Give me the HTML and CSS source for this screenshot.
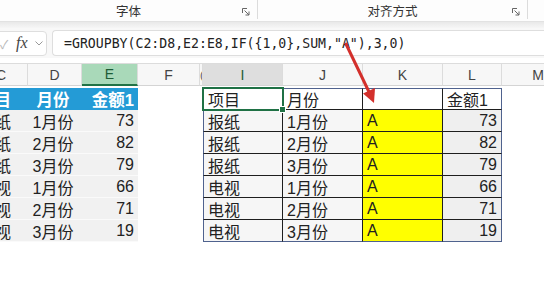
FILE: index.html
```html
<!DOCTYPE html>
<html lang="zh">
<head>
<meta charset="utf-8">
<link rel="stylesheet" href="styles.css">
</head>
<body>
<div class="page">
  <div class="ribbon">
    <div class="group g1"><span class="glabel">字体</span><svg class="launch" viewBox="0 0 8 8"><path d="M0.5 5V0.5H5M2.5 2.5L7 7M7 3.5V7H3.5" fill="none" stroke="#666" stroke-width="1"/></svg></div>
    <div class="group g2"><span class="glabel">对齐方式</span><svg class="launch" viewBox="0 0 8 8"><path d="M0.5 5V0.5H5M2.5 2.5L7 7M7 3.5V7H3.5" fill="none" stroke="#666" stroke-width="1"/></svg></div>
  </div>
  <div class="band"></div>
  <div class="fxbar">
    <div class="fxbox">
      <span class="check">✓</span>
      <span class="fx">fx</span>
      <svg class="chev" viewBox="0 0 8 5"><path d="M0.5 0.5L4 4L7.5 0.5" fill="none" stroke="#999" stroke-width="1"/></svg>
    </div>
    <div class="formula">=GROUPBY(C2:D8,E2:E8,IF({1,0},SUM,"A"),3,0)</div>
  </div>
  <div class="sheet">
    <div class="ch">C</div><div class="ch">D</div><div class="ch ch-e">E</div><div class="ch">F</div><div class="ch ch-g">(</div><div class="ch ch-i">I</div><div class="ch">J</div><div class="ch">K</div><div class="ch">L</div><div class="ch ch-m">M</div>

    <div class="lh lc">项目</div><div class="lh lm">月份</div><div class="lh ln">金额1</div><div class="e"></div><div class="e"></div>
    <div class="rc rt ri sel">项目<span class="handle"></span></div><div class="rc rt">月份</div><div class="rc rt"></div><div class="rc rt rl-h">金额1</div><div class="e"></div>

    <div class="ld lc">报纸</div><div class="ld lm">1月份</div><div class="ld ln">73</div><div class="e"></div><div class="e"></div>
    <div class="rc ri g">报纸</div><div class="rc g">1月份</div><div class="rc y">A</div><div class="rc rl">73</div><div class="e"></div>

    <div class="ld lc">报纸</div><div class="ld lm">2月份</div><div class="ld ln">82</div><div class="e"></div><div class="e"></div>
    <div class="rc ri g">报纸</div><div class="rc g">2月份</div><div class="rc y">A</div><div class="rc rl">82</div><div class="e"></div>

    <div class="ld lc">报纸</div><div class="ld lm">3月份</div><div class="ld ln">79</div><div class="e"></div><div class="e"></div>
    <div class="rc ri g">报纸</div><div class="rc g">3月份</div><div class="rc y">A</div><div class="rc rl">79</div><div class="e"></div>

    <div class="ld lc">电视</div><div class="ld lm">1月份</div><div class="ld ln">66</div><div class="e"></div><div class="e"></div>
    <div class="rc ri g">电视</div><div class="rc g">1月份</div><div class="rc y">A</div><div class="rc rl">66</div><div class="e"></div>

    <div class="ld lc">电视</div><div class="ld lm">2月份</div><div class="ld ln">71</div><div class="e"></div><div class="e"></div>
    <div class="rc ri g">电视</div><div class="rc g">2月份</div><div class="rc y">A</div><div class="rc rl">71</div><div class="e"></div>

    <div class="ld lc">电视</div><div class="ld lm">3月份</div><div class="ld ln">19</div><div class="e"></div><div class="e"></div>
    <div class="rc ri g rb">电视</div><div class="rc g rb">3月份</div><div class="rc y rb">A</div><div class="rc rl rb">19</div><div class="e"></div>
  </div>
  <svg class="arrow" viewBox="0 0 544 294" width="544" height="294">
    <line x1="346" y1="44" x2="370" y2="94" stroke="#d3302c" stroke-width="3" stroke-linecap="round"/>
    <polygon points="374,103 363,93.5 375,88" fill="#d3302c"/>
  </svg>
</div>
</body>
</html>
```
FILE: styles.css
```css
html, body {
  margin: 0;
  padding: 0;
  background: #fff;
}
.page {
  position: relative;
  width: 544px;
  height: 294px;
  overflow: hidden;
  font-family: "Liberation Sans", "Noto Sans CJK SC", sans-serif;
  color: #222;
}
.ribbon {
  height: 21px;
  display: flex;
  border-bottom: 1px solid #e2e2e2;
  background: #fdfdfd;
}
.group {
  position: relative;
  display: flex;
  align-items: center;
  justify-content: center;
  border-right: 1px solid #dcdcdc;
  box-sizing: border-box;
  height: 19px;
  padding-top: 2px;
}
.g1 { width: 258px; }
.g2 { width: 270px; }
.glabel {
  font-family: "Noto Sans CJK SC", sans-serif;
  font-size: 12.5px;
  color: #333;
}
.launch {
  position: absolute;
  right: 7px;
  top: 8px;
  width: 8px;
  height: 8px;
}
.band {
  height: 6px;
  background: linear-gradient(#e9e9e9, #f6f6f6);
}
.fxbar {
  height: 30px;
  display: flex;
  align-items: center;
  background: #f8f8f8;
  gap: 5px;
}
.fxbox {
  width: 56px;
  height: 25px;
  margin-left: -9px;
  box-sizing: border-box;
  border: 1px solid #dedede;
  border-radius: 4px;
  background: #fff;
  display: flex;
  align-items: center;
}
.check {
  color: #b8b8b8;
  font-size: 12px;
  width: 24px;
  text-align: center;
}
.fx {
  font-family: "Liberation Serif", serif;
  font-style: italic;
  font-size: 16px;
  color: #444;
  width: 14px;
}
.chev {
  width: 8px;
  height: 5px;
  margin-left: 5px;
}
.formula {
  flex: 1;
  height: 26px;
  box-sizing: border-box;
  border: 1px solid #dedede;
  border-right: none;
  border-radius: 4px 0 0 4px;
  background: #fff;
  font-family: "DejaVu Sans Mono", monospace;
  font-size: 13.2px;
  color: #222;
  line-height: 25px;
  padding-left: 11px;
  white-space: nowrap;
}
.sheet {
  margin-top: 5px;
  display: grid;
  grid-template-columns: 28px 54px 56px 62px 3px 80px 80px 80px 59px 42px;
  grid-template-rows: 25px repeat(7, 22px);
  font-size: 15px;
}
.ch {
  box-sizing: border-box;
  border-top: 1px solid #dcdcdc;
  border-right: 1px solid #dcdcdc;
  border-bottom: 1px solid #d4d4d4;
  background: #f7f7f7;
  display: flex;
  align-items: center;
  justify-content: center;
  font-size: 14px;
  color: #444;
  margin-bottom: 2px;
}
.ch:first-child { justify-content: flex-start; padding-left: 0; text-indent: -4px; }
.ch-e { background: #a9d9b9; color: #1d5c36; border-bottom: 2px solid #217346; }
.ch-g { font-size: 11px; overflow: hidden; justify-content: flex-start; color: #555; }
.ch-i { background: #dedede; color: #1d5c36; }
.ch-m { justify-content: flex-end; padding-right: 0; border-right: none; }
.e { background: #fff; }
.lh, .ld {
  box-sizing: border-box;
  display: flex;
  align-items: center;
  white-space: nowrap;
  font-family: "Liberation Sans", "Noto Sans CJK SC", sans-serif;
  font-size: 16px;
}
.lh {
  background: #249bd6;
  color: #fff;
  font-weight: bold;
  font-size: 16.5px;
}
.ld {
  background: #f1f1f1;
  border-bottom: 1px solid #fafafa;
  color: #222;
}
.lc { justify-content: flex-end; padding-right: 17px; }
.lm { justify-content: center; padding-right: 4px; }
.ln { justify-content: flex-end; padding-right: 4px; }
.rc {
  box-sizing: border-box;
  display: flex;
  align-items: center;
  padding: 0 4px;
  border-right: 1px solid #1e1e1e;
  border-bottom: 1px solid #1e1e1e;
  font-family: "Liberation Sans", "Noto Sans CJK SC", sans-serif;
  font-size: 16px;
  white-space: nowrap;
  background: #fff;
  color: #222;
}
.rt { border-top: 1px solid #4f628e; }
.ri { border-left: 1px solid #4f628e; }
.rl, .rl-h { border-right: 1px solid #4f628e; }
.rl { justify-content: flex-end; background: #efefef; }
.rb { border-bottom: 1px solid #4f628e; }
.g { background: #f6f6f6; }
.y { background: #ffff00; }
.sel {
  position: relative;
  outline: 2px solid #1f7145;
  outline-offset: -1px;
}
.handle {
  position: absolute;
  right: -4px;
  bottom: -4px;
  width: 5px;
  height: 5px;
  background: #1f7145;
  border: 1px solid #fff;
}
.arrow {
  position: absolute;
  left: 0;
  top: 0;
  pointer-events: none;
}
```
